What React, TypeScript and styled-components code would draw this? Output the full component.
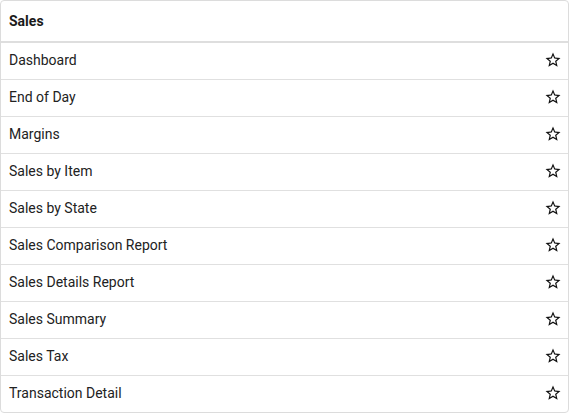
import styled, { createGlobalStyle } from 'styled-components';

const GlobalStyle = createGlobalStyle`
	body {
		margin: 0;
		background: #fff;
		font-family: Roboto, 'Noto Sans', sans-serif;
	}
`;

const Card = styled.div`
	width: 567px;
	border: 1px solid #dcdcdc;
	border-radius: 4px;
	background: #fff;
	overflow: hidden;
`;

const Header = styled.div`
	height: 40px;
	display: flex;
	align-items: center;
	padding: 0 8px;
	border-bottom: 2px solid #dedede;
	font-size: 14px;
	font-weight: 700;
	color: #1a1a1a;
`;

const Row = styled.div`
	height: 36px;
	display: flex;
	align-items: center;
	justify-content: space-between;
	padding: 0 6px 0 8px;
	font-size: 14px;
	color: #222;
	border-bottom: 1px solid #e0e0e0;

	&:last-child {
		border-bottom: none;
	}
`;

const Label = styled.span`
	position: relative;
	top: -1px;
`;

const StarButton = styled.span`
	display: flex;
	width: 18px;
	height: 18px;
	margin-top: -2px;
	color: #111;
`;

const Star = () => (
	<StarButton>
		<svg viewBox='0 0 24 24' width='18' height='18' fill='currentColor'>
			<path d='M22 9.24l-7.19-.62L12 2 9.19 8.63 2 9.24l5.46 4.73L5.82 21 12 17.27 18.18 21l-1.63-7.03L22 9.24zM12 15.4l-3.76 2.27 1-4.28-3.32-2.88 4.38-.38L12 6.1l1.71 4.04 4.38.38-3.32 2.88 1 4.28L12 15.4z' />
		</svg>
	</StarButton>
);

const reports = [
	'Dashboard',
	'End of Day',
	'Margins',
	'Sales by Item',
	'Sales by State',
	'Sales Comparison Report',
	'Sales Details Report',
	'Sales Summary',
	'Sales Tax',
	'Transaction Detail',
];

const App = () => (
	<>
		<GlobalStyle />
		<Card>
			<Header>Sales</Header>
			{reports.map((name) => (
				<Row key={name}>
					<Label>{name}</Label>
					<Star />
				</Row>
			))}
		</Card>
	</>
);

export default App;
